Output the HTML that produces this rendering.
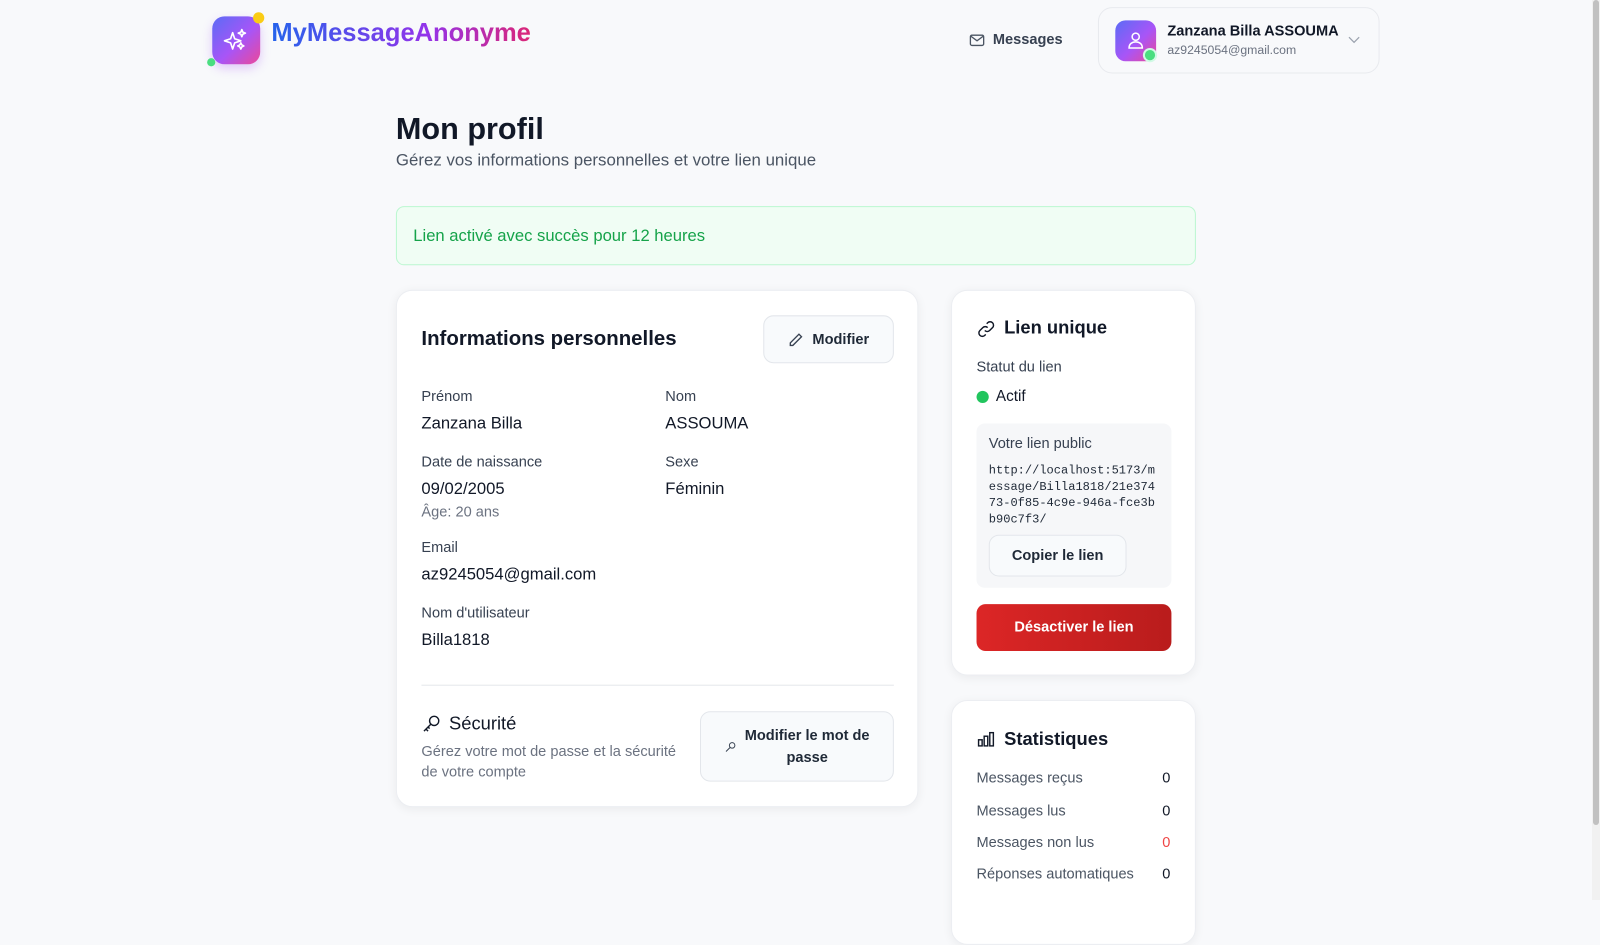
<!DOCTYPE html>
<html><head><meta charset="utf-8"><style>
*{box-sizing:border-box;margin:0;padding:0}
body{width:1600px;height:900px;overflow:hidden;background:#f8f9fb;font-family:"Liberation Sans",sans-serif;color:#111827;position:relative}
#w{position:absolute;left:0;top:0;width:1568px;height:882px;transform:scale(1.0204);transform-origin:0 0}
.abs{position:absolute}
.sb{position:absolute;right:0;top:0;width:8px;height:900px;background:#f1f1f1}
.sb div{position:absolute;left:1px;top:0;width:6px;height:825px;background:#c1c1c1;border-radius:3px}
.card{position:absolute;background:#fff;border:1px solid #eceef2;border-radius:16px;box-shadow:0 2px 10px rgba(0,0,0,.06)}
.lbl{position:absolute;font-size:14.3px;color:#374151}
.val{position:absolute;font-size:16.3px;color:#111827}
.btn{position:absolute;border:1px solid #e3e6eb;border-radius:10px;background:#f8fafc;font-weight:bold;color:#1f2937;font-size:14.3px;display:flex;align-items:center;justify-content:center}
.row{position:absolute;left:24px;right:24px;font-size:14.3px;color:#4b5563;display:flex;justify-content:space-between}
.row b{color:#111827;font-weight:normal}
</style></head><body>
<div class="sb"><div></div></div>
<div id="w">
<div class="abs" style="left:208px;top:16px;width:47px;height:47px;border-radius:12px;background:linear-gradient(135deg,#5b6cf6,#a855f7 55%,#ec4899);box-shadow:0 4px 10px rgba(168,85,247,.3)">
<svg width="47" height="47" viewBox="0 0 47 47" fill="none" stroke="#fff" stroke-width="1.6" stroke-linejoin="round"><path d="M20 16l2 6 6 2-6 2-2 6-2-6-6-2 6-2z"/><path d="M29 13l1 2.5 2.5 1-2.5 1-1 2.5-1-2.5-2.5-1 2.5-1z"/><path d="M28 26l1 2 2 1-2 1-1 2-1-2-2-1 2-1z"/></svg></div>
<div class="abs" style="left:248px;top:12px;width:11px;height:11px;border-radius:50%;background:#facc15"></div>
<div class="abs" style="left:203px;top:57px;width:8px;height:8px;border-radius:50%;background:#4ade80"></div>
<div class="abs" style="left:266px;top:18px;font-size:25px;font-weight:bold;background:linear-gradient(90deg,#2563eb,#9333ea 60%,#db2777);-webkit-background-clip:text;color:transparent">MyMessageAnonyme</div>
<svg class="abs" style="left:950px;top:33px" width="15" height="13" viewBox="0 0 15 13" fill="none" stroke="#4b5563" stroke-width="1.3"><rect x="1" y="1.5" width="13" height="10" rx="1.5"/><path d="M1.5 2.5l6 4.5 6-4.5"/></svg>
<div class="abs" style="left:973px;top:31px;font-size:14.3px;font-weight:bold;color:#374151">Messages</div>
<div class="abs" style="left:1076px;top:7px;width:276px;height:65px;border:1px solid #e8eaee;border-radius:14px;background:#f8f9fb"></div>
<div class="abs" style="left:1093px;top:20px;width:40px;height:40px;border-radius:10px;background:linear-gradient(135deg,#5b6cf6,#a855f7 55%,#ec4899)">
<svg width="40" height="40" viewBox="0 0 40 40" fill="none" stroke="#fff" stroke-width="1.5"><circle cx="20" cy="16" r="3.5"/><path d="M13.5 27c0-4 3-6 6.5-6s6.5 2 6.5 6z"/></svg></div>
<div class="abs" style="left:1120px;top:47px;width:14px;height:14px;border-radius:50%;background:#4ade80;border:2px solid #d1fae5"></div>
<div class="abs" style="left:1144px;top:23px;font-size:14.3px;font-weight:bold">Zanzana Billa ASSOUMA</div>
<div class="abs" style="left:1144px;top:42px;font-size:12px;color:#6b7280">az9245054@gmail.com</div>
<svg class="abs" style="left:1321px;top:35px" width="12" height="8" viewBox="0 0 12 8" fill="none" stroke="#9ca3af" stroke-width="1.2"><path d="M1 1.5l5 5 5-5"/></svg>
<div class="abs" style="left:388px;top:110px;font-size:30px;font-weight:bold">Mon profil</div>
<div class="abs" style="left:388px;top:148px;font-size:16.5px;color:#4b5563">Gérez vos informations personnelles et votre lien unique</div>
<div class="abs" style="left:388px;top:202px;width:784px;height:58px;border:1px solid #bbf7d0;background:#f0fdf4;border-radius:8px;color:#16a34a;font-size:16.3px;padding:19px 16px">Lien activé avec succès pour 12 heures</div>
<div class="card" style="left:388px;top:284px;width:512px;height:507px">
<div class="abs" style="left:24px;top:36px;font-size:20px;font-weight:bold">Informations personnelles</div>
<div class="btn" style="left:359px;top:24px;width:128px;height:47px"><svg width="16" height="16" viewBox="0 0 16 16" fill="none" stroke="#374151" stroke-width="1.3" style="margin-right:8px"><path d="M11 2.5l2.5 2.5L5 13.5H2.5V11z"/></svg>Modifier</div>
<div class="lbl" style="left:24px;top:96px">Prénom</div><div class="val" style="left:24px;top:121px">Zanzana Billa</div>
<div class="lbl" style="left:263px;top:96px">Nom</div><div class="val" style="left:263px;top:121px">ASSOUMA</div>
<div class="lbl" style="left:24px;top:160px">Date de naissance</div><div class="val" style="left:24px;top:185px">09/02/2005</div>
<div class="abs" style="left:24px;top:209px;font-size:14.3px;color:#6b7280">Âge: 20 ans</div>
<div class="lbl" style="left:263px;top:160px">Sexe</div><div class="val" style="left:263px;top:185px">Féminin</div>
<div class="lbl" style="left:24px;top:244px">Email</div><div class="val" style="left:24px;top:269px">az9245054@gmail.com</div>
<div class="lbl" style="left:24px;top:308px">Nom d'utilisateur</div><div class="val" style="left:24px;top:333px">Billa1818</div>
<div class="abs" style="left:24px;top:386px;width:463px;height:1px;background:#e5e7eb"></div>
<svg class="abs" style="left:24px;top:414px" width="20" height="20" viewBox="0 0 20 20" fill="none" stroke="#111827" stroke-width="1.4"><circle cx="12.5" cy="7.5" r="4.5"/><path d="M9.3 10.7L2.5 17.5M4.5 15.5l2 2M6.5 13.5l1.5 1.5"/></svg>
<div class="abs" style="left:51px;top:414px;font-size:18px">Sécurité</div>
<div class="abs" style="left:24px;top:442px;font-size:14.3px;color:#6b7280;line-height:20px;width:262px">Gérez votre mot de passe et la sécurité de votre compte</div>
<div class="btn" style="left:297px;top:412px;width:190px;height:69px;line-height:22px;text-align:center"><svg width="12" height="12" viewBox="0 0 20 20" fill="none" stroke="#374151" stroke-width="1.6" style="margin-right:8px"><circle cx="12.5" cy="7.5" r="4.5"/><path d="M9.3 10.7L2.5 17.5"/></svg><span>Modifier le mot de<br>passe</span></div>
</div>
<div class="card" style="left:932px;top:284px;width:240px;height:378px">
<svg class="abs" style="left:24px;top:28px" width="19" height="19" viewBox="0 0 20 20" fill="none" stroke="#111827" stroke-width="1.5"><path d="M8.5 11.5a3.5 3.5 0 005 0l3-3a3.5 3.5 0 00-5-5l-1 1"/><path d="M11.5 8.5a3.5 3.5 0 00-5 0l-3 3a3.5 3.5 0 005 5l1-1"/></svg>
<div class="abs" style="left:51px;top:26px;font-size:18px;font-weight:bold">Lien unique</div>
<div class="lbl" style="left:24px;top:67px">Statut du lien</div>
<div class="abs" style="left:24px;top:98px;width:12px;height:12px;border-radius:50%;background:#22c55e"></div>
<div class="abs" style="left:43px;top:95px;font-size:15px">Actif</div>
<div class="abs" style="left:24px;top:130px;width:191px;height:161px;background:#f6f7f9;border-radius:8px">
<div class="abs" style="left:12px;top:12px;font-size:14.3px;color:#374151">Votre lien public</div>
<div class="abs" style="left:12px;top:38px;width:167px;font-family:'Liberation Mono',monospace;font-size:11.8px;line-height:16px;color:#1f2937;word-break:break-all">http://localhost:5173/message/Billa1818/21e37473-0f85-4c9e-946a-fce3bb90c7f3/</div>
<div class="btn" style="left:12px;top:109px;width:135px;height:41px">Copier le lien</div>
</div>
<div class="abs" style="left:24px;top:307px;width:191px;height:46px;border-radius:9px;background:linear-gradient(90deg,#dc2626,#b91c1c);color:#fff;font-weight:bold;font-size:14.3px;display:flex;align-items:center;justify-content:center">Désactiver le lien</div>
</div>
<div class="card" style="left:932px;top:686px;width:240px;height:240px">
<svg class="abs" style="left:25px;top:30px" width="17" height="15" viewBox="0 0 17 15" fill="none" stroke="#111827" stroke-width="1.4"><rect x="1" y="8" width="3.5" height="6"/><rect x="6.5" y="4.5" width="3.5" height="9.5"/><rect x="12" y="1" width="3.5" height="13"/></svg>
<div class="abs" style="left:51px;top:27px;font-size:18px;font-weight:bold">Statistiques</div>
<div class="row" style="top:68px"><span>Messages reçus</span><b>0</b></div>
<div class="row" style="top:100px"><span>Messages lus</span><b>0</b></div>
<div class="row" style="top:131px"><span>Messages non lus</span><b style="color:#ef4444">0</b></div>
<div class="row" style="top:162px"><span>Réponses automatiques</span><b>0</b></div>
</div>
</div>
</body></html>
